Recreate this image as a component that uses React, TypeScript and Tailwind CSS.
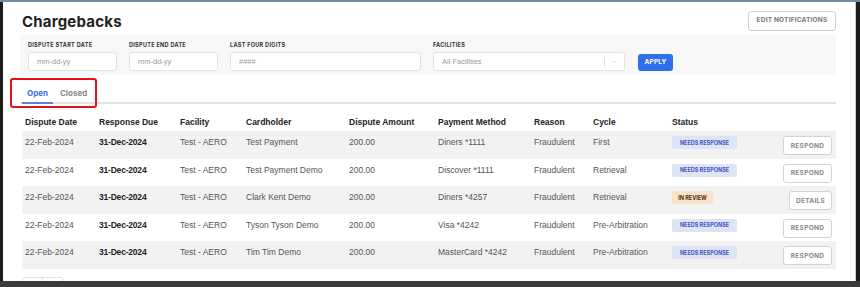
import { ChevronDown } from 'lucide-react'

type Row = {
  date: string
  due: string
  facility: string
  holder: string
  amount: string
  method: string
  reason: string
  cycle: string
  status: 'needs' | 'review'
}

const rows: Row[] = [
  { date: '22-Feb-2024', due: '31-Dec-2024', facility: 'Test - AERO', holder: 'Test Payment', amount: '200.00', method: 'Diners *1111', reason: 'Fraudulent', cycle: 'First', status: 'needs' },
  { date: '22-Feb-2024', due: '31-Dec-2024', facility: 'Test - AERO', holder: 'Test Payment Demo', amount: '200.00', method: 'Discover *1111', reason: 'Fraudulent', cycle: 'Retrieval', status: 'needs' },
  { date: '22-Feb-2024', due: '31-Dec-2024', facility: 'Test - AERO', holder: 'Clark Kent Demo', amount: '200.00', method: 'Diners *4257', reason: 'Fraudulent', cycle: 'Retrieval', status: 'review' },
  { date: '22-Feb-2024', due: '31-Dec-2024', facility: 'Test - AERO', holder: 'Tyson Tyson Demo', amount: '200.00', method: 'Visa *4242', reason: 'Fraudulent', cycle: 'Pre-Arbitration', status: 'needs' },
  { date: '22-Feb-2024', due: '31-Dec-2024', facility: 'Test - AERO', holder: 'Tim Tim Demo', amount: '200.00', method: 'MasterCard *4242', reason: 'Fraudulent', cycle: 'Pre-Arbitration', status: 'needs' },
]

const cols = 'grid grid-cols-[74px_81px_66px_103px_89px_96px_59px_79px_1fr]'
const label = "mb-[3px] h-[8px] text-[5.5px] font-bold uppercase leading-[8px] tracking-[0.3px] text-[#333] [font-family:Inter,sans-serif]"
const input = "flex h-[19px] items-center rounded-[3px] border border-[#e3e3e3] bg-white px-[8px] text-[7.5px] text-[#9a9a9a]"

export default function App() {
  return (
    <div className="flex h-[287px] w-[860px] flex-col overflow-hidden bg-[#1d1d1d] [font-family:'Liberation_Sans',Arial,sans-serif]">
      <div className="h-[2px] bg-[#6f8fa8]" />
      <div className="flex flex-1 overflow-hidden">
        <div className="w-[3px] bg-[#1d1d1d]" />
        <div className="relative flex-1 overflow-hidden border-r border-[#cfcfcf] bg-white">
          <div className="ml-[17px] w-[816px]">
            {/* Header */}
            <div className="mt-[9px] flex h-[20px] items-center justify-between">
              <h1 className="pl-[2px] text-[15px] font-bold leading-none tracking-[0.2px] text-[#222] [font-family:Inter,sans-serif]">
                Chargebacks
              </h1>
              <button className="h-[20px] w-[88px] rounded-[3px] border border-[#cfcfcf] bg-white text-[6.5px] font-bold tracking-[0.2px] text-[#777] [font-family:Inter,sans-serif]">
                EDIT NOTIFICATIONS
              </button>
            </div>

            {/* Filters */}
            <div className="mt-[4px] flex h-[40px] items-end gap-[12px] bg-[#f7f7f8] px-[8px] pb-[4px]">
              <div className="flex w-[89px] flex-col">
                <div className={label}>Dispute Start Date</div>
                <div className={input}>mm-dd-yy</div>
              </div>
              <div className="flex w-[89px] flex-col">
                <div className={label}>Dispute End Date</div>
                <div className={input}>mm-dd-yy</div>
              </div>
              <div className="flex w-[191px] flex-col">
                <div className={label}>Last Four Digits</div>
                <div className={input}>####</div>
              </div>
              <div className="flex w-[192px] flex-col">
                <div className={label}>Facilities</div>
                <div className={input + ' justify-between pr-[6px]'}>
                  <span>All Facilities</span>
                  <span className="flex items-center gap-[5px]">
                    <span className="h-[10px] w-px bg-[#e0e0e0]" />
                    <ChevronDown size={8} strokeWidth={1.5} className="text-[#bbb]" />
                  </span>
                </div>
              </div>
              <button className="ml-[1px] h-[17px] w-[35px] rounded-[3px] bg-[#2f6fe8] text-[6.5px] font-bold tracking-[0.2px] text-white [font-family:Inter,sans-serif]">
                APPLY
              </button>
            </div>

            {/* Tabs */}
            <div className="relative mt-[3px] flex h-[26px] items-end gap-[2px] border-b-2 border-[#e4e4e4] pl-[2px]">
              <div className="-mb-[2px] flex h-[24px] items-center border-b-2 border-[#5b7fe0] px-[5px] pt-[3px] text-[8px] font-bold text-[#3d6ee6] [font-family:Inter,sans-serif]">
                Open
              </div>
              <div className="flex h-[22px] items-center px-[5px] pt-[3px] text-[8px] font-bold text-[#888] [font-family:Inter,sans-serif]">
                Closed
              </div>
              <div className="absolute -left-[10px] top-0 h-[30px] w-[87px] rounded-[3px] border-2 border-[#e3101c]" />
            </div>

            {/* Table head */}
            <div className={cols + ' h-[27px] pl-[5px] pr-[4px] pt-[12px] text-[8.5px] font-bold text-[#222]'}>
              <div>Dispute Date</div>
              <div>Response Due</div>
              <div>Facility</div>
              <div>Cardholder</div>
              <div>Dispute Amount</div>
              <div>Payment Method</div>
              <div>Reason</div>
              <div>Cycle</div>
              <div>Status</div>
            </div>

            {/* Rows */}
            {rows.map((r, i) => (
              <div
                key={i}
                className={
                  cols +
                  ' ml-[2px] h-[27.6px] items-start pl-[3px] pr-[4px] pt-[5px] text-[8.5px] leading-[12px] text-[#555] ' +
                  (i % 2 === 0 ? 'bg-[#f2f2f3]' : 'bg-white')
                }
              >
                <div>{r.date}</div>
                <div className="text-[8.5px] font-bold tracking-[-0.2px] text-[#222]">{r.due}</div>
                <div>{r.facility}</div>
                <div>{r.holder}</div>
                <div>{r.amount}</div>
                <div>{r.method}</div>
                <div>{r.reason}</div>
                <div>{r.cycle}</div>
                <div className="flex items-start justify-between">
                  {r.status === 'needs' ? (
                    <span className="flex h-[13px] w-[65px] items-center justify-center rounded-[2px] bg-[#dfe4f5] text-[5.5px] font-bold text-[#3f55c6] [font-family:Inter,sans-serif]">
                      NEEDS RESPONSE
                    </span>
                  ) : (
                    <span className="flex h-[13px] w-[41px] items-center justify-center rounded-[2px] bg-[#f9e2c5] text-[5.5px] font-bold text-[#4a2f14] [font-family:Inter,sans-serif]">
                      IN REVIEW
                    </span>
                  )}
                  <button
                    className={
                      'h-[19px] rounded-[3px] border border-[#d2d2d2] bg-white text-[6.5px] font-bold tracking-[0.3px] text-[#888] [font-family:Inter,sans-serif] ' +
                      (r.status === 'needs' ? 'w-[49px]' : 'w-[43px]')
                    }
                  >
                    {r.status === 'needs' ? 'RESPOND' : 'DETAILS'}
                  </button>
                </div>
              </div>
            ))}

            {/* Pagination (cut off) */}
            <div className="mt-[8px] ml-[2px] flex h-[16px] w-[42px] rounded-[3px] border border-[#e2e2e2]">
              <div className="w-[20px] border-r border-[#e2e2e2]" />
            </div>
          </div>
        </div>
        <div className="w-[4px] bg-[#1d1d1d]" />
      </div>
      <div className="h-[6px] bg-[#3a3a3a]" />
    </div>
  )
}
